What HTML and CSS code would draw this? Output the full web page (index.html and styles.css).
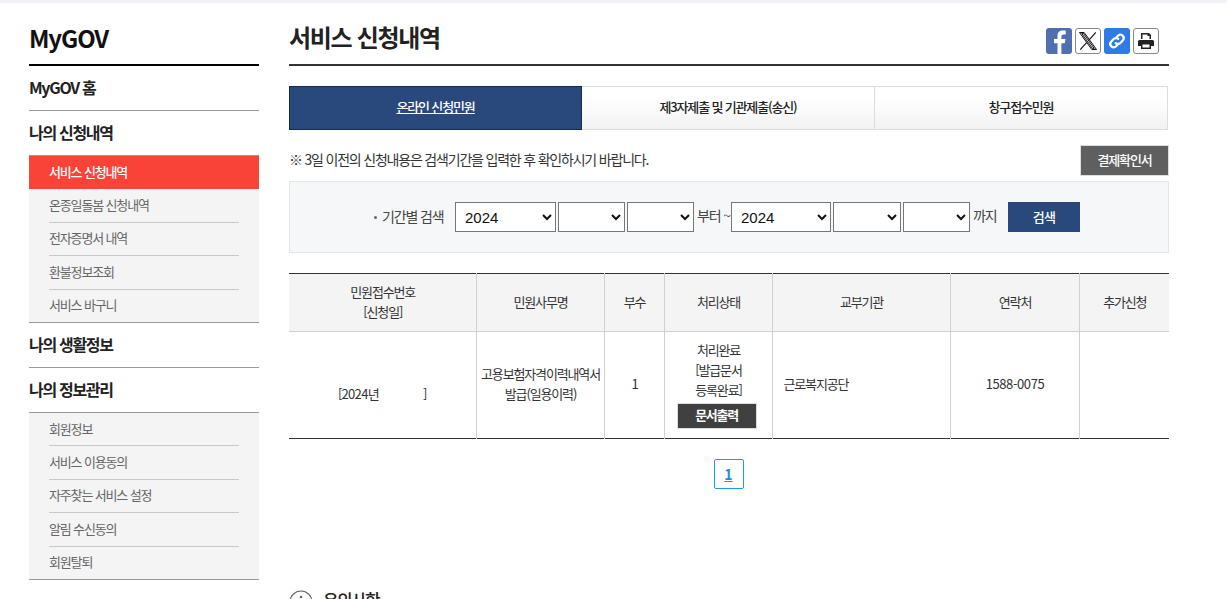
FILE: index.html
```html
<!DOCTYPE html>
<html lang="ko">
<head>
<meta charset="utf-8">
<title>서비스 신청내역 | MyGOV</title>
<link rel="stylesheet" href="styles.css">
</head>
<body>
<div class="page">
  <aside class="side">
    <h1 class="side-title">MyGOV</h1>
    <nav>
      <a class="menu" href="#">MyGOV 홈</a>
      <a class="menu" href="#">나의 신청내역</a>
      <ul class="sub">
        <li class="on"><a href="#">서비스 신청내역</a></li>
        <li><a href="#">온종일돌봄 신청내역</a></li>
        <li><a href="#">전자증명서 내역</a></li>
        <li><a href="#">환불정보조회</a></li>
        <li><a href="#">서비스 바구니</a></li>
      </ul>
      <a class="menu" href="#">나의 생활정보</a>
      <a class="menu" href="#">나의 정보관리</a>
      <ul class="sub">
        <li><a href="#">회원정보</a></li>
        <li><a href="#">서비스 이용동의</a></li>
        <li><a href="#">자주찾는 서비스 설정</a></li>
        <li><a href="#">알림 수신동의</a></li>
        <li><a href="#">회원탈퇴</a></li>
      </ul>
    </nav>
  </aside>
  <main class="main">
    <header class="head">
      <h2 class="head-title">서비스 신청내역</h2>
      <div class="share">
        <a class="ico fb" href="#" aria-label="페이스북"><svg viewBox="0 0 26 26" width="26" height="26"><path fill="#fff" d="M15.400 26V15.200h3.500l.6-4.200h-4.100V8.500c0-1.300.5-2.100 2.200-2.100h2.100V2.600c-.5-.1-1.700-.2-3-.2-3 0-5.200 1.800-5.200 5.300V11H8v4.200h3.500V26z"/></svg></a>
        <a class="ico line" href="#" aria-label="X"><svg viewBox="0 0 24 24" width="24" height="24"><path fill="none" stroke="#111" stroke-width="1" d="M3.500 3.500h4.700l12.300 17h-4.700zM5.800 4.600h1.800l10.600 14.800h-1.800z"/><path fill="none" stroke="#111" stroke-width="1.100" d="M19.800 3.300l-6.900 7.800M10.800 13.300l-6.600 7.400"/></svg></a>
        <a class="ico link" href="#" aria-label="링크 복사"><svg viewBox="0 0 26 26" width="26" height="26"><g fill="none" stroke="#fff" stroke-width="2.200" stroke-linecap="round"><path d="M11.700 10.300l2.200-2.500a3.300 3.300 0 0 1 4.700-.200 3.300 3.300 0 0 1 .3 4.600l-2.500 2.700a3.300 3.300 0 0 1-4.700.2"/><path d="M14.300 15.700l-2.200 2.500a3.300 3.300 0 0 1-4.700.2 3.300 3.300 0 0 1-.3-4.600l2.500-2.700a3.300 3.300 0 0 1 4.700-.2"/></g></svg></a>
        <a class="ico line" href="#" aria-label="인쇄"><svg viewBox="0 0 24 24" width="24" height="24"><path fill="#222" d="M7 4h8l2 2v4h-1.500V7h-2V5.500h-5V10H7zM5.500 11h13a1.500 1.500 0 0 1 1.500 1.500V17h-3v3H7v-3H4v-4.500A1.500 1.500 0 0 1 5.500 11zM8.500 15.500v3h7v-3z"/></svg></a>
      </div>
    </header>

    <div class="tabs">
      <a class="tab active" href="#">온라인 신청민원</a>
      <a class="tab" href="#">제3자제출 및 기관제출(송신)</a>
      <a class="tab" href="#">창구접수민원</a>
    </div>

    <div class="note-row">
      <p class="note">※ 3일 이전의 신청내용은 검색기간을 입력한 후 확인하시기 바랍니다.</p>
      <a class="pay" href="#">결제확인서</a>
    </div>

    <form class="search">
      <span class="search-label">기간별 검색</span>
      <select class="s-year"><option>2024</option></select>
      <select class="s-md"><option></option></select>
      <select class="s-md"><option></option></select>
      <span class="word from">부터 ~</span>
      <select class="s-year2"><option>2024</option></select>
      <select class="s-md2"><option></option></select>
      <select class="s-md"><option></option></select>
      <span class="word to">까지</span>
      <button class="go" type="button">검색</button>
    </form>

    <table class="list">
      <colgroup>
        <col class="c1"><col class="c2"><col class="c3"><col class="c4"><col class="c5"><col class="c6"><col class="c7">
      </colgroup>
      <thead>
        <tr>
          <th>민원접수번호<br>[신청일]</th>
          <th>민원사무명</th>
          <th>부수</th>
          <th>처리상태</th>
          <th>교부기관</th>
          <th>연락처</th>
          <th>추가신청</th>
        </tr>
      </thead>
      <tbody>
        <tr>
          <td class="date">[2024년<span class="gap"></span>]</td>
          <td>고용보험자격이력내역서<br>발급(일용이력)</td>
          <td>1</td>
          <td class="state">처리완료<br>[발급문서<br>등록완료]<a class="doc" href="#">문서출력</a></td>
          <td class="left">근로복지공단</td>
          <td class="tel">1588-0075</td>
          <td></td>
        </tr>
      </tbody>
    </table>

    <div class="paging"><a href="#">1</a></div>

    <section class="caution">
      <svg class="caution-ico" viewBox="0 0 24 24" width="24" height="24"><circle cx="12" cy="12" r="11" fill="none" stroke="#666" stroke-width="1.200"/><circle cx="12" cy="7" r="1.300" fill="#666"/><rect x="11" y="10" width="2" height="8" fill="#666"/></svg>
      <h3>유의사항</h3>
    </section>
  </main>
</div>
</body>
</html>
```

FILE: styles.css
```css
* { box-sizing: border-box; }
html, body { margin: 0; padding: 0; height: 599px; overflow: hidden; background: #fff; }
body {
  border-top: 3px solid #f1f1f6;
  font-family: "Noto Sans CJK KR", "Noto Sans", sans-serif;
  color: #333;
  font-size: 13px;
  letter-spacing: -1.15px;
}
a { color: inherit; text-decoration: none; }
ul { list-style: none; margin: 0; padding: 0; }
h1, h2, h3, p { margin: 0; }

.page { display: flex; gap: 30px; padding-left: 29px; }

/* sidebar */
.side { width: 230px; flex: none; }
.side-title {
  height: 63px;
  padding-top: 17px;
  border-bottom: 2px solid #000;
  font-size: 24px;
  line-height: 36px;
  font-weight: 700;
  color: #111;
  letter-spacing: -1.1px;
}
.menu {
  display: flex;
  align-items: center;
  height: 45px;
  padding-bottom: 2px;
  border-bottom: 1px solid #999;
  font-size: 16px;
  font-weight: 700;
  color: #222;
  letter-spacing: -1.3px;
}
.sub {
  background: #f4f4f4;
  padding: 0 20px;
  border-bottom: 1px solid #999;
}
.sub li {
  height: 33.4px;
  padding-bottom: 2px;
  display: flex;
  align-items: center;
  border-bottom: 1px solid #c8c8c8;
  font-size: 13px;
  color: #666;
}
.sub li:last-child { height: 32.4px; border-bottom: 0; }
.sub li.on {
  margin: 0 -20px;
  padding: 0 20px 2px;
  background: #f94339;
  color: #fff;
  font-weight: 500;
  border-bottom: 0;
}

/* main */
.main { width: 880px; flex: none; }
.head {
  height: 63px;
  border-bottom: 2px solid #333;
  display: flex;
  align-items: flex-start;
  justify-content: space-between;
  padding: 15px 10px 0 0;
}
.head-title { font-size: 24px; line-height: 38px; font-weight: 700; color: #222; letter-spacing: -1.3px; }
.share { display: flex; gap: 3px; margin-top: 10px; }
.ico {
  width: 26px;
  height: 26px;
  border-radius: 3px;
  display: flex;
  align-items: center;
  justify-content: center;
  overflow: hidden;
}
.fb { background: #4f6fb0; }
.link { background: #2f7ae5; }
.line { background: #fff; border: 1px solid #888; }

.tabs { display: flex; margin-top: 20px; width: 879px; }
.tab {
  flex: 0 0 293px;
  height: 44px;
  padding-bottom: 3px;
  display: flex;
  align-items: center;
  justify-content: center;
  border: 1px solid #ddd;
  border-left: 0;
  background: linear-gradient(#fff 30%, #f1f2f1);
  font-size: 13px;
  font-weight: 500;
  color: #222;
}
.tab.active {
  background: #29497c;
  border: 1px solid #122c52;
  color: #fff;
  text-decoration: underline;
}
.note-row {
  display: flex;
  align-items: center;
  justify-content: space-between;
  margin-top: 15px;
  height: 31px;
}
.note { font-size: 14px; color: #333; letter-spacing: -1.2px; padding-bottom: 4px; }
.pay {
  width: 89px;
  height: 31px;
  padding-bottom: 3px;
  display: flex;
  align-items: center;
  justify-content: center;
  background: #5f5f5f;
  border: 1px solid #ddd;
  color: #fff;
  font-weight: 500;
}
.search {
  display: flex;
  align-items: center;
  margin-top: 5px;
  height: 72px;
  padding-left: 83px;
  background: #f6f7f9;
  border: 1px solid #e6e6e8;
}
.search-label { position: relative; width: 82px; padding: 0 0 2px 9px; font-size: 14px; color: #444; }
.search-label::before {
  content: "";
  position: absolute;
  left: 1px;
  top: 50%;
  width: 3px;
  height: 3px;
  margin-top: -1px;
  border-radius: 50%;
  background: #666;
}
select {
  height: 30px;
  margin-right: 2px;
  background: #fff;
  border: 1px solid #777;
  font-family: "Liberation Sans", sans-serif;
  font-size: 15px;
  letter-spacing: 0;
  color: #111;
  padding-left: 5px;
  border-radius: 0;
}
.s-year { width: 101px; }
.s-year2 { width: 100px; }
.s-md { width: 67px; }
.s-md2 { width: 68px; }
.word { font-size: 14px; color: #444; padding: 0 0 4px 1px; flex: none; }
.from { width: 35px; }
.to { width: 36px; }
.go {
  width: 72px;
  height: 30px;
  padding: 0 0 2px;
  background: #29497c;
  border: 0;
  color: #fff;
  font: 500 13px "Noto Sans CJK KR", sans-serif;
  letter-spacing: -0.8px;
}

.list {
  width: 880px;
  margin-top: 20px;
  table-layout: fixed;
  border-collapse: collapse;
  border-top: 1px solid #333;
  border-bottom: 1px solid #333;
}
.c1 { width: 187px; }
.c2 { width: 128px; }
.c3 { width: 60px; }
.c4 { width: 108px; }
.c5 { width: 178px; }
.c6 { width: 129px; }
.c7 { width: 90px; }
.list th, .list td {
  border-left: 1px solid #d0d0d0;
  text-align: center;
  padding: 0 0 2px 1px;
  font-size: 13px;
  line-height: 20px;
  color: #333;
}
.list th:first-child, .list td:first-child { border-left: 0; }
.list th {
  height: 58px;
  background: #f4f4f4;
  border-bottom: 1px solid #d0d0d0;
  font-weight: 400;
}
.list td { height: 107px; }
.list td.date { padding: 18px 0 0 0; letter-spacing: -0.7px; }
.gap { display: inline-block; width: 44px; }
.list td.left { text-align: left; padding-left: 11px; }
.list td.state { padding: 0 0 2px 1px; }
.list td.tel { letter-spacing: -0.4px; }
.doc {
  display: flex;
  align-items: center;
  justify-content: center;
  width: 80px;
  height: 26px;
  margin: 3px 0 0 11px;
  padding-bottom: 2px;
  background: #404040;
  border: 1px solid #ddd;
  color: #fff;
  font-weight: 700;
  line-height: 1;
  letter-spacing: -1.3px;
}
.paging { display: flex; justify-content: center; margin-top: 20px; padding-right: 1px; }
.paging a {
  width: 30px;
  height: 30px;
  display: flex;
  align-items: center;
  justify-content: center;
  border: 1px solid #1a9cee;
  border-radius: 2px;
  color: #1a8fe3;
  font-size: 14px;
  font-weight: 700;
  letter-spacing: 0;
  text-decoration: underline;
}
.caution { display: flex; align-items: flex-start; gap: 10px; margin-top: 101px; }
.caution h3 { font-size: 17px; line-height: 22px; font-weight: 500; color: #222; margin-top: -1px; letter-spacing: -1.6px; }
```
